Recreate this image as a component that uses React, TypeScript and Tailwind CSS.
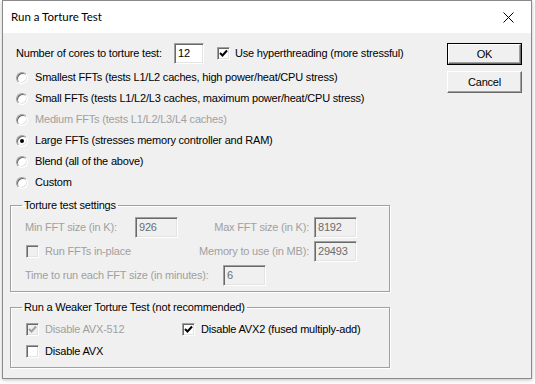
import React from 'react';

const sunken =
  'border border-t-[#a0a0a0] border-l-[#a0a0a0] border-b-white border-r-white shadow-[inset_1px_1px_0_#696969,inset_-1px_-1px_0_#e3e3e3]';

function Check({ checked, disabled }: { checked?: boolean; disabled?: boolean }) {
  return (
    <span className={`w-[13px] h-[13px] shrink-0 flex items-center justify-center ${sunken} ${disabled ? 'bg-[#f0f0f0]' : 'bg-white'}`}>
      {checked && (
        <svg width="9" height="9" viewBox="0 0 9 9">
          <path d="M1 4 L3.5 6.5 L8 1.5" fill="none" stroke={disabled ? '#a0a0a0' : '#000'} strokeWidth="2" />
        </svg>
      )}
    </span>
  );
}

function Radio({ label, checked, disabled }: { label: string; checked?: boolean; disabled?: boolean }) {
  return (
    <div className={`h-[21px] flex items-center gap-[7px] ${disabled ? 'text-[#a0a0a0]' : ''}`}>
      <span className="w-[12px] h-[12px] shrink-0 rounded-full border border-t-[#a0a0a0] border-l-[#a0a0a0] border-b-white border-r-white bg-white shadow-[inset_1px_1px_0_#696969,inset_-1px_-1px_0_#e3e3e3] flex items-center justify-center">
        {checked && <span className="w-[4px] h-[4px] rounded-full bg-black" />}
      </span>
      <span>{label}</span>
    </div>
  );
}

function Field({ value, w, disabled }: { value: string; w: string; disabled?: boolean }) {
  return (
    <div className={`${w} h-[21px] shrink-0 ${sunken} ${disabled ? 'bg-[#f0f0f0] text-[#6d6d6d]' : 'bg-white'} flex items-center pl-[3px]`}>
      {value}
    </div>
  );
}

function Button({ label, isDefault }: { label: string; isDefault?: boolean }) {
  return (
    <div className={`w-[75px] h-[22px] ${isDefault ? 'border border-black' : ''}`}>
      <div className="w-full h-full flex items-center justify-center border border-t-white border-l-white border-b-[#696969] border-r-[#696969] shadow-[inset_-1px_-1px_0_#a0a0a0] bg-[#f0f0f0]">
        {label}
      </div>
    </div>
  );
}

export default function App() {
  return (
    <div className="w-[535px] h-[384px] bg-white overflow-hidden text-[11px] tracking-[-0.2px] whitespace-nowrap text-black" style={{ fontFamily: '"Liberation Sans", Arial, sans-serif' }}>
      <div className="ml-[2px] w-[530px] h-[379px] border border-[#8a8a8a] bg-[#f0f0f0] shadow-[0_1px_4px_rgba(0,0,0,0.25)] flex flex-col">
        {/* Title bar */}
        <div className="h-[32px] bg-white flex items-center justify-between pl-[8px] pr-[17px]">
          <span className="text-[11.5px] tracking-normal" style={{ fontFamily: 'Lato, sans-serif' }}>Run a Torture Test</span>
          <svg width="11" height="11" viewBox="0 0 11 11">
            <path d="M0.5 0.5 L10.5 10.5 M10.5 0.5 L0.5 10.5" stroke="#000" strokeWidth="1" />
          </svg>
        </div>

        <div className="flex-1 flex pl-[7px] pr-[9px] pt-[10px]">
          {/* Left column */}
          <div className="w-[380px] shrink-0 flex flex-col">
            <div className="h-[21px] ml-[6px] flex items-center">
              <span className="w-[158px] shrink-0">Number of cores to torture test:</span>
              <Field value="12" w="w-[30px]" />
              <span className="ml-[13px] shrink-0 flex items-center gap-[5px]">
                <Check checked />
                <span>Use hyperthreading (more stressful)</span>
              </span>
            </div>
            <div className="ml-[6px] mt-[3px] flex flex-col">
              <Radio label="Smallest FFTs (tests L1/L2 caches, high power/heat/CPU stress)" />
              <Radio label="Small FFTs (tests L1/L2/L3 caches, maximum power/heat/CPU stress)" />
              <Radio label="Medium FFTs (tests L1/L2/L3/L4 caches)" disabled />
              <Radio label="Large FFTs (stresses memory controller and RAM)" checked />
              <Radio label="Blend (all of the above)" />
              <Radio label="Custom" />
            </div>

            <fieldset className="mt-[6px] border border-[#a0a0a0] shadow-[1px_1px_0_white,inset_1px_1px_0_white] pb-[4px]">
              <legend className="ml-[11px] px-[2px] leading-[13px]">Torture test settings</legend>
              <div className="text-[#a0a0a0] mt-[3px] pl-[14px] flex flex-col">
                <div className="h-[24px] flex items-center">
                  <span className="w-[110px] shrink-0">Min FFT size (in K):</span>
                  <Field value="926" w="w-[43px]" disabled />
                  <span className="w-[136px] shrink-0 text-right pr-[5px]">Max FFT size (in K):</span>
                  <Field value="8192" w="w-[43px]" disabled />
                </div>
                <div className="h-[24px] flex items-center">
                  <span className="ml-[1px] w-[152px] shrink-0 flex items-center gap-[6px]">
                    <Check disabled />
                    <span>Run FFTs in-place</span>
                  </span>
                  <span className="w-[136px] shrink-0 text-right pr-[5px]">Memory to use (in MB):</span>
                  <Field value="29493" w="w-[43px]" disabled />
                </div>
                <div className="h-[24px] flex items-center">
                  <span className="w-[198px] shrink-0">Time to run each FFT size (in minutes):</span>
                  <Field value="6" w="w-[43px]" disabled />
                </div>
              </div>
            </fieldset>

            <fieldset className="mt-[9px] border border-[#a0a0a0] shadow-[1px_1px_0_white,inset_1px_1px_0_white] pb-[5px]">
              <legend className="ml-[11px] px-[2px] leading-[13px]">Run a Weaker Torture Test (not recommended)</legend>
              <div className="mt-[4px] pl-[15px] flex flex-col">
                <div className="h-[22px] flex items-center">
                  <span className="w-[156px] shrink-0 flex items-center gap-[6px] text-[#a0a0a0]">
                    <Check checked disabled />
                    <span>Disable AVX-512</span>
                  </span>
                  <span className="shrink-0 flex items-center gap-[6px]">
                    <Check checked />
                    <span>Disable AVX2 (fused multiply-add)</span>
                  </span>
                </div>
                <div className="h-[22px] flex items-center gap-[6px]">
                  <Check />
                  <span>Disable AVX</span>
                </div>
              </div>
            </fieldset>
          </div>

          {/* Right column */}
          <div className="flex-1 flex flex-col items-end gap-[6px]">
            <Button label="OK" isDefault />
            <Button label="Cancel" />
          </div>
        </div>
      </div>
    </div>
  );
}
